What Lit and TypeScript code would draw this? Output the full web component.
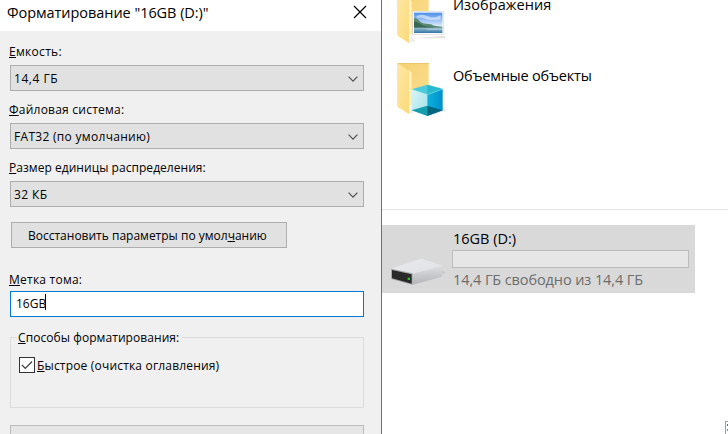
import { LitElement, html, css, svg } from "lit";
import { customElement, property } from "lit/decorators.js";

const folder = svg`
  <linearGradient id="back" x1="0" y1="0" x2="1" y2="1">
    <stop offset="0" stop-color="#f5d071"></stop><stop offset="1" stop-color="#fbdf8f"></stop>
  </linearGradient>
  <linearGradient id="flap" x1="0" y1="0" x2="1" y2="1">
    <stop offset="0" stop-color="#ffe9a8"></stop><stop offset="1" stop-color="#fad978"></stop>
  </linearGradient>
  <path d="M70 130 L82 146 L62 154Z" fill="#eeeeee"></path>
  <path d="M28 0H122V127H28Z" fill="url(#back)"></path>
  <path d="M28 0H122V3H33Z" fill="#eec566"></path>
  <path d="M63 22L71 28V125L63 130Z" fill="#fff0bd"></path>
  <path d="M28 0L63 23V153L28 131Z" fill="url(#flap)"></path>`;

@customElement("folder-icon")
export class FolderIcon extends LitElement {
  @property() kind: "pictures" | "objects" = "pictures";

  static styles = css`
    :host { display: block; width: 60px; height: 56px; }
    svg { display: block; width: 60px; height: 56px; }
  `;

  render() {
    return html`<svg viewBox="0 0 180 168">
      ${folder}
      ${this.kind === "pictures"
        ? svg`
          <linearGradient id="sky" x1="0" y1="0" x2="0" y2="1">
            <stop offset="0" stop-color="#4d8fea"></stop><stop offset="1" stop-color="#f0f8fd"></stop>
          </linearGradient>
          <linearGradient id="sea" x1="0" y1="0" x2="0" y2="1">
            <stop offset="0" stop-color="#9cc0d2"></stop><stop offset="1" stop-color="#3576a5"></stop>
          </linearGradient>
          <path d="M76 139H171V131Z" fill="#e2e2e2"></path>
          <rect x="73" y="57" width="95" height="71" fill="#d7dce2"></rect>
          <rect x="75" y="59" width="91" height="67" fill="#f8fafc"></rect>
          <rect x="78" y="62" width="85" height="46" fill="url(#sky)"></rect>
          <path d="M86 72Q104 64 120 73T158 70V82Q130 86 112 80T86 78Z" fill="#ffffff" opacity=".5"></path>
          <path d="M78 78Q87 77 94 86T116 95T138 101L163 104V109H78Z" fill="#5b8a73"></path>
          <path d="M78 88Q91 92 101 98T136 105V109H78Z" fill="#386754"></path>
          <rect x="78" y="107" width="85" height="16" fill="url(#sea)"></rect>
          <path d="M110 110H163V113H120Z" fill="#c5d9e2" opacity=".8"></path>`
        : svg`
          <path d="M118 158L175 143L163 130Z" fill="#e6e6e6"></path>
          <linearGradient id="left" x1="0" y1="0" x2="1" y2="1">
            <stop offset="0" stop-color="#d9f6f7"></stop><stop offset="1" stop-color="#9fe0e8"></stop>
          </linearGradient>
          <linearGradient id="right" x1="0" y1="0" x2="1" y2="0">
            <stop offset="0" stop-color="#0cb1dd"></stop><stop offset="1" stop-color="#008fca"></stop>
          </linearGradient>
          <path d="M71 79L118 65L164 78L118 95Z" fill="#4ccbdc"></path>
          <path d="M118 65L164 78L118 95Z" fill="#27b9cf"></path>
          <path d="M71 79L118 95V159L71 142Z" fill="url(#left)"></path>
          <path d="M164 78L118 95V159L164 142Z" fill="url(#right)"></path>
          <path d="M71 142L118 128V159Z" fill="#159eae"></path>
          <path d="M118 128L164 142L118 159Z" fill="#00657f"></path>
          <path d="M71 79L118 95L164 78" fill="none" stroke="#8ee6ee" stroke-width="1.5"></path>`}
    </svg>`;
  }
}

@customElement("combo-box")
export class ComboBox extends LitElement {
  @property() value = "";

  static styles = css`
    :host {
      display: flex; justify-content: space-between; align-items: flex-start;
      box-sizing: border-box; height: 26px; padding: 1px 5px 0 3px;
      background: #e1e1e1; border: 1px solid #adadad; line-height: 23px;
    }
    svg { width: 10px; height: 6px; margin-top: 9px; }
  `;

  render() {
    return html`<span>${this.value}</span>
      <svg viewBox="0 0 10 6"><path d="M.6 .7L5 5.1L9.4 .7" fill="none" stroke="#505050" stroke-width="1.2"></path></svg>`;
  }
}

@customElement("app-root")
export class AppRoot extends LitElement {
  static styles = css`
    :host {
      display: flex; width: 728px; height: 434px; overflow: hidden; background: #fff; color: #000;
      font: 14.5px/20px "Open Sans", "Noto Sans", sans-serif;
    }
    * { box-sizing: border-box; }
    span, label, .restore, .legend { white-space: nowrap; }
    u { text-decoration: underline; text-decoration-thickness: 1px; text-underline-offset: 1px; text-decoration-skip-ink: none; }

    .dialog { width: 382px; flex: none; height: 434px; overflow: hidden; border-right: 1px solid #707070; background: #f0f0f0; }
    .title { display: flex; justify-content: space-between; height: 31px; padding: 3px 14px 0 7px; background: #fff; letter-spacing: -.05px; }
    .title svg { width: 14px; height: 14px; margin-top: 2px; }
    .form { display: flex; flex-direction: column; padding: 13px 17px 0 10px; font: 12px/15px "Open Sans", "Noto Sans", sans-serif; }
    .label { height: 16px; margin: 0 0 5px -1px; }
    combo-box { margin-bottom: 11px; }
    .s4 { letter-spacing: .04px; }
    .s7 { letter-spacing: .07px; }
    .s18 { letter-spacing: .18px; }
    .s23 { letter-spacing: .23px; }
    .s30 { letter-spacing: .3px; }
    .s40 { letter-spacing: .4px; }
    .s55 { letter-spacing: .55px; }
    .restore {
      width: 276px; height: 26px; margin: 4px 0 24px 1px; padding: 1px 0 0 16px; border: 1px solid #adadad;
      background: #e1e1e1; line-height: 23px;
    }
    .volume { margin-bottom: 3px; }
    .input { display: flex; height: 26px; padding: 2px 0 0 5px; border: 1px solid #0078d7; background: #fff; line-height: 19px; }
    .input span { width: 29px; }
    .caret { width: 1px; height: 16px; background: #000; }
    .group { display: flex; flex-direction: column; height: 71px; margin-top: 20px; border: 1px solid #dcdcdc; }
    .legend { align-self: flex-start; height: 16px; margin: -8px 0 0 6px; padding: 0 3px 0 1px; background: #f0f0f0; }
    .check { display: flex; align-items: center; gap: 2px; margin: 11px 0 0 8px; }
    .check svg { width: 16px; height: 16px; }
    .start { height: 26px; margin-top: 17px; background: #e6e6e6; border: 1px solid #bcbcbc; }

    .explorer { flex: 1; display: flex; flex-direction: column; height: 434px; min-width: 0; }
    .folders { height: 210px; flex: none; border-bottom: 1px solid #e5e5e5; overflow: hidden; display: flex; flex-direction: column; gap: 15px; }
    .item { display: flex; height: 56px; flex: none; padding-left: 6px; gap: 5px; }
    .item:first-child { margin-top: -8px; }
    .item span { margin-top: 3px; }
    .pictures { letter-spacing: .08px; }
    .objects { letter-spacing: -.2px; }
    .drive { display: flex; width: 313px; height: 68px; flex: none; margin-top: 15px; padding: 3px 6px 0 0; background: #d9d9d9; }
    .drive > svg { width: 70px; height: 40px; margin-top: 22px; }
    .info { flex: 1; display: flex; flex-direction: column; }
    .info span { padding: 1px 0 0 1px; }
    .bar { height: 18px; margin: 1px 0; border: 1px solid #bcbcbc; background: #e6e6e6; }
    .free { color: #6d6d6d; letter-spacing: -.1px; }
    .views { display: flex; flex-direction: column; gap: 3px; align-self: flex-end; width: 3px; height: 13px; margin-top: auto; padding: 2px 0 0 1px; border: solid #a0a0a0; border-width: 1px 0 0 1px; overflow: hidden; }
    .views i { height: 2px; flex: none; background: #4c7d68; }
    .views i:nth-child(2) { background: #7c8da8; }
    .views i:nth-child(3) { background: #91485a; }
  `;

  render() {
    return html`
      <section class="dialog">
        <header class="title">
          <span>Форматирование "16GB (D:)"</span>
          <svg viewBox="0 0 14 14"><path d="M1 1L13 13M13 1L1 13" stroke="#000" stroke-width="1.15"></path></svg>
        </header>
        <div class="form">
          <label class="label s30"><u>Е</u>мкость:</label>
          <combo-box class="s55" value="14,4 ГБ"></combo-box>
          <label class="label s23"><u>Ф</u>айловая система:</label>
          <combo-box class="s30" value="FAT32 (по умолчанию)"></combo-box>
          <label class="label s4"><u>Р</u>азмер единицы распределения:</label>
          <combo-box class="s40" value="32 КБ"></combo-box>
          <div class="restore">Восстановить параметры по умол<u>ч</u>анию</div>
          <label class="label volume s23"><u>М</u>етка тома:</label>
          <div class="input"><span>16GB</span><div class="caret"></div></div>
          <div class="group">
            <div class="legend s7"><u>С</u>пособы форматирования:</div>
            <label class="check">
              <svg viewBox="0 0 16 16">
                <rect x=".5" y=".5" width="15" height="15" fill="#fff" stroke="#333"></rect>
                <path d="M3 8L6.3 11.4L13 4.5" fill="none" stroke="#404040" stroke-width="1.3"></path>
              </svg>
              <span class="s18"><u>Б</u>ыстрое (очистка оглавления)</span>
            </label>
          </div>
          <div class="start"></div>
        </div>
      </section>
      <section class="explorer">
        <div class="folders">
          <div class="item"><folder-icon kind="pictures"></folder-icon><span class="pictures">Изображения</span></div>
          <div class="item"><folder-icon kind="objects"></folder-icon><span class="objects">Объемные объекты</span></div>
        </div>
        <div class="drive">
          <svg viewBox="0 0 210 120">
            <defs>
              <linearGradient id="top" x1="0" y1="0" x2="1" y2="1"><stop offset="0" stop-color="#e9eaed"></stop><stop offset="1" stop-color="#dfe1e5"></stop></linearGradient>
              <linearGradient id="side" x1="0" y1="0" x2="0" y2="1"><stop offset="0" stop-color="#dcdde0"></stop><stop offset="1" stop-color="#b4b5b8"></stop></linearGradient>
            </defs>
            <path d="M92 104L192 69L179 60Z" fill="#c9c9c9"></path>
            <path d="M27 56L111 28Q117 26 124 28L179 46Q182 49 177 52L92 73Z" fill="url(#top)"></path>
            <path d="M92 71L180 49V77Q180 80 175 82L98 103Q92 105 92 102Z" fill="url(#side)"></path>
            <path d="M27 56L92 70V105L30 88Q27 87 27 84Z" fill="#a8a9ab"></path>
            <path d="M30 60L89 73V101L30 85Z" fill="#292929"></path>
            <rect x="77" y="83" width="7" height="7" fill="#25c52d"></rect>
          </svg>
          <div class="info">
            <span>16GB (D:)</span>
            <div class="bar"></div>
            <span class="free">14,4 ГБ свободно из 14,4 ГБ</span>
          </div>
        </div>
        <div class="views"><i></i><i></i><i></i></div>
      </section>`;
  }
}
